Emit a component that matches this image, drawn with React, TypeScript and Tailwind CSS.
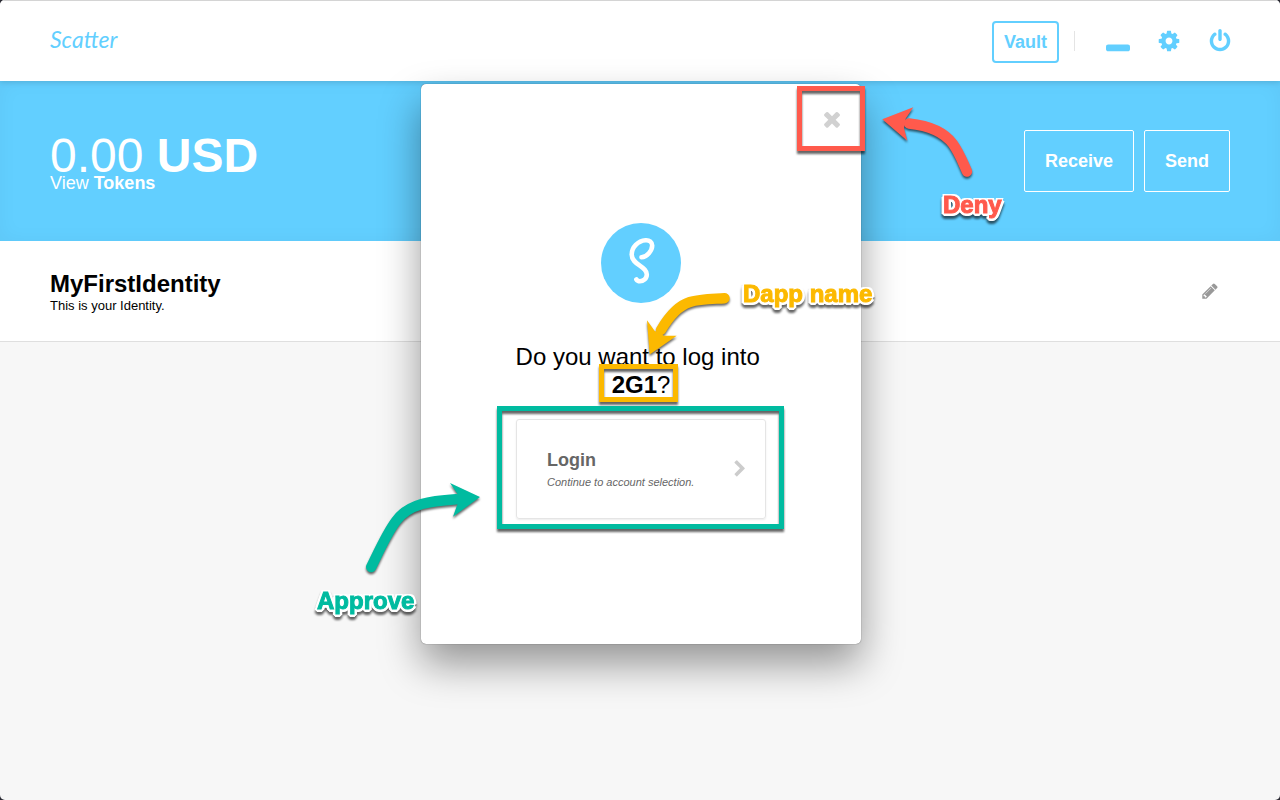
import type { ReactNode } from "react";

const ICONS = {
  times:
    "M1490 1322q0 40-28 68l-136 136q-28 28-68 28t-68-28l-294-294-294 294q-28 28-68 28t-68-28l-136-136q-28-28-28-68t28-68l294-294-294-294q-28-28-28-68t28-68l136-136q28-28 68-28t68 28l294 294 294-294q28-28 68-28t68 28l136 136q28 28 28 68t-28 68l-294 294 294 294q28 28 28 68z",
  cog: "M1152 896q0-106-75-181t-181-75-181 75-75 181 75 181 181 75 181-75 75-181zm512-109v222q0 12-8 23t-20 13l-185 28q-19 54-39 91 35 50 107 138 10 12 10 25t-9 23q-27 37-99 108t-94 71q-12 0-26-9l-138-108q-44 23-91 38-16 136-29 186-7 28-36 28h-222q-14 0-24.5-8.5t-11.5-21.5l-28-184q-49-16-90-37l-141 107q-10 9-25 9-14 0-25-11-126-114-165-168-7-10-7-23 0-12 8-23 15-21 51-66.5t54-70.5q-27-50-41-99l-183-27q-13-2-21-12.5t-8-23.5v-222q0-12 8-23t19-13l186-28q14-46 39-92-40-57-107-138-10-12-10-24 0-10 9-23 26-36 98.5-107.5t94.5-71.5q13 0 26 10l138 107q44-23 91-38 16-136 29-186 7-28 36-28h222q14 0 24.5 8.5t11.5 21.5l28 184q49 16 90 37l142-107q9-9 24-9 13 0 25 10 129 119 165 170 7 8 7 22 0 12-8 23-15 21-51 66.5t-54 70.5q26 50 41 98l183 28q13 2 21 12.5t8 23.5z",
  power:
    "M1664 896q0 156-61 298t-164 245-245 164-298 61-298-61-245-164-164-245-61-298q0-182 80.5-343t226.5-270q43-32 95.5-25t83.5 50q32 42 24.5 94.5t-49.5 84.5q-98 74-151.5 181t-53.5 228q0 104 40.5 198.5t109.5 163.5 163.5 109.5 198.5 40.5 198.5-40.5 163.5-109.5 109.5-163.5 40.5-198.5q0-121-53.5-228t-151.5-181q-42-32-49.5-84.5t24.5-94.5q31-43 84-50t95 25q146 109 226.5 270t80.5 343zm-640-768v640q0 52-38 90t-90 38-90-38-38-90v-640q0-52 38-90t90-38 90 38 38 90z",
  minimize:
    "M1792 1312v192q0 66-47 113t-113 47h-1472q-66 0-113-47t-47-113v-192q0-66 47-113t113-47h1472q66 0 113 47t47 113z",
  pencil:
    "M491 1536l91-91-235-235-91 91v107h128v128h107zm523-928q0-22-22-22-10 0-17 7l-542 542q-7 7-7 17 0 22 22 22 10 0 17-7l542-542q7-7 7-17zm-54-192l416 416-832 832h-416v-416zm683 96q0 53-37 90l-166 166-416-416 166-165q36-38 90-38 53 0 91 38l235 234q37 39 37 91z",
  chevronRight:
    "M1363 877l-742 742q-19 19-45 19t-45-19l-166-166q-19-19-19-45t19-45l531-531-531-531q-19-19-19-45t19-45l166-166q19-19 45-19t45 19l742 742q19 19 19 45t-19 45z",
};

function Icon({ name, className }: { name: keyof typeof ICONS; className: string }) {
  return (
    <svg viewBox="0 0 1792 1792" fill="currentColor" aria-hidden="true" className={className}>
      <path d={ICONS[name]} />
    </svg>
  );
}

function IconButton({ label, children }: { label: string; children: ReactNode }) {
  return (
    <button type="button" aria-label={label} className="flex items-center justify-center">
      {children}
    </button>
  );
}

function Header() {
  return (
    <header className="relative z-10 flex h-[81px] items-center justify-between border-t border-[#d4d4d4] bg-white px-[50px] text-[#62cfff] shadow-[0_1px_6px_rgba(0,0,0,0.15)]">
      <a href="#home" className="pb-1 font-[Lato,sans-serif] text-[23px] leading-7 italic">
        Scatter
      </a>
      <nav className="flex items-center">
        <button
          type="button"
          className="mt-0.5 h-[42px] rounded-[4px] border-2 border-[#62cfff] px-2.5 text-lg font-bold"
        >
          Vault
        </button>
        <span className="ml-[15px] h-5 w-px bg-[#e4e4e4]" />
        <div className="ml-[31px] flex items-center gap-[27px]">
          <IconButton label="Minimize">
            <Icon name="minimize" className="h-6 w-6" />
          </IconButton>
          <IconButton label="Settings">
            <Icon name="cog" className="h-6 w-6" />
          </IconButton>
          <IconButton label="Lock">
            <Icon name="power" className="-mr-0.5 h-6 w-6" />
          </IconButton>
        </div>
      </nav>
    </header>
  );
}

function Balance() {
  return (
    <section className="flex h-40 items-center justify-between bg-[#62cfff] px-[50px] text-white shadow-[inset_0_0_20px_rgba(0,0,0,0.04)]">
      <div className="pt-1">
        <p className="text-5xl leading-10">
          0.00 <b>USD</b>
        </p>
        <a href="#tokens" className="block text-lg leading-[14px]">
          View <b>Tokens</b>
        </a>
      </div>
      <div className="flex gap-2.5 text-lg font-bold">
        <button type="button" className="h-[62px] rounded-[2px] border border-white px-5">
          Receive
        </button>
        <button type="button" className="h-[62px] rounded-[2px] border border-white px-5">
          Send
        </button>
      </div>
    </section>
  );
}

function Identity() {
  return (
    <section className="flex h-[101px] items-center justify-between border-b border-[#dfdfdf] bg-white px-[50px] text-black">
      <div className="pt-0.5">
        <h1 className="text-2xl leading-7 font-bold">MyFirstIdentity</h1>
        <p className="text-[13px] leading-4">This is your Identity.</p>
      </div>
      <button type="button" aria-label="Edit identity" className="pr-2.5 text-[#999999]">
        <Icon name="pencil" className="h-[18px] w-5" />
      </button>
    </section>
  );
}

function Mark() {
  return (
    <svg viewBox="0 0 80 80" className="h-20 w-20" role="img" aria-label="Scatter logo">
      <circle cx="40" cy="40" r="40" fill="#62cfff" />
      <path
        d="M40.5 34.2C46 34 51.2 27.5 51.2 22.5C51.2 19 48.5 17 44.5 17.3C37 17.8 30.7 24.5 30.7 31.5C30.7 42 45.8 43 45.8 51.5C45.8 56 42 58.2 39 58.2C37.2 58.2 36 57.5 35.4 56.5"
        fill="none"
        stroke="white"
        strokeWidth="4.6"
        strokeLinecap="round"
        strokeLinejoin="round"
      />
    </svg>
  );
}

function Arrows() {
  return (
    <svg
      viewBox="0 0 440 560"
      aria-hidden="true"
      className="pointer-events-none absolute inset-0 overflow-visible drop-shadow-[0_2px_1px_rgba(0,0,0,0.6)]"
    >
      <g transform="translate(-421 -84)" fill="none" strokeWidth="10.4" strokeLinecap="round">
        <g stroke="#ff5a4c">
          <path d="M909 123.5C932 126 945 133 953 144C960 154 963 163 967 171.5" />
          <path stroke="none" fill="#ff5a4c" d="M882.3 119.2L913.3 107.3L905.7 118.5L904 128L907.3 140.7Z" />
        </g>
        <g stroke="#fcb900">
          <path d="M661 330C668 318 677 306 690 302C700 299 714 299 724.5 298.2" />
          <path stroke="none" fill="#fcb900" d="M649.7 354.5L647 320.3L654.5 330.7L664 335.7L676.7 335.7Z" />
        </g>
        <g stroke="#00bba0">
          <path d="M371.2 567C380 549 387 533 396 521C409 503 432 501 456 499.3" />
          <path stroke="none" fill="#00bba0" d="M480 497L450 483L457.7 494.3L457.5 504L453 516.7Z" />
        </g>
      </g>
    </svg>
  );
}

const LABEL =
  "absolute text-2xl leading-7 font-bold whitespace-nowrap drop-shadow-[0_3px_1px_rgba(0,0,0,0.6)] [-webkit-text-stroke:1px_currentColor] [text-shadow:2px_0_white,-2px_0_white,0_2px_white,0_-2px_white,2px_2px_white,-2px_2px_white,2px_-2px_white,-2px_-2px_white,3px_1px_white,-3px_1px_white,1px_3px_white,-1px_3px_white]";

const FRAME =
  "pointer-events-none absolute border-[5px] drop-shadow-[0_3px_1px_rgba(0,0,0,0.6)]";

function Annotations() {
  return (
    <>
      <div className={`${FRAME} top-[2px] right-[-4px] h-[65px] w-[68px] border-[#ff5a4c]`} />
      <div className={`${FRAME} top-[280px] left-[178px] h-[38px] w-[79px] border-[#fcb900]`} />
      <div className={`${FRAME} top-[322px] left-[76px] h-[123px] w-[287px] border-[#00bba0]`} />
      <Arrows />
      <span className={`${LABEL} top-[107px] left-[522px] text-[#ff5a4c]`}>Deny</span>
      <span className={`${LABEL} top-[196px] left-[322px] text-[#fcb900]`}>Dapp name</span>
      <span className={`${LABEL} top-[503px] left-[-104px] text-[#00bba0]`}>Approve</span>
    </>
  );
}

function LoginDialog() {
  return (
    <div className="absolute inset-0 z-20 flex items-start justify-center pt-[84px] pl-0.5">
      <div
        role="dialog"
        aria-labelledby="login-question"
        className="relative flex min-h-[560px] w-[440px] flex-col items-center rounded-[5px] bg-white shadow-[0_0_1px_rgba(0,0,0,0.7),0_20px_40px_rgba(0,0,0,0.4)]"
      >
        <button
          type="button"
          aria-label="Close"
          className="flex h-[70px] items-center self-end pr-[17px] text-[#d1d1d1]"
        >
          <Icon name="times" className="h-6 w-6" />
        </button>
        <div className="flex w-[250px] flex-col items-center pt-[69px]">
          <Mark />
          <h2
            id="login-question"
            className="mt-10 text-center text-2xl leading-7 whitespace-nowrap text-black"
          >
            Do you want to log into&nbsp;
            <br />
            <b>2G1</b>?
          </h2>
          <button
            type="button"
            className="mt-5 flex h-[100px] w-full items-center justify-between rounded-[3px] border border-[#e5e5e5] pr-4 pl-[30px] text-left text-[#666666] shadow-[0_1px_2px_rgba(0,0,0,0.08)]"
          >
            <span className="flex flex-col pt-0.5">
              <span className="text-lg leading-6 font-bold">Login</span>
              <span className="text-[11px] leading-5 italic">Continue to account selection.</span>
            </span>
            <Icon name="chevronRight" className="h-[18px] w-[18px] text-[#cccccc]" />
          </button>
        </div>
        <Annotations />
      </div>
    </div>
  );
}

export default function App() {
  return (
    <div className="bg-[#2a2a33] font-['Liberation_Sans',Arial,sans-serif]">
      <div className="relative min-h-screen overflow-hidden rounded-[5px] bg-[#f7f7f7]">
        <Header />
        <main>
          <Balance />
          <Identity />
        </main>
        <LoginDialog />
      </div>
    </div>
  );
}
